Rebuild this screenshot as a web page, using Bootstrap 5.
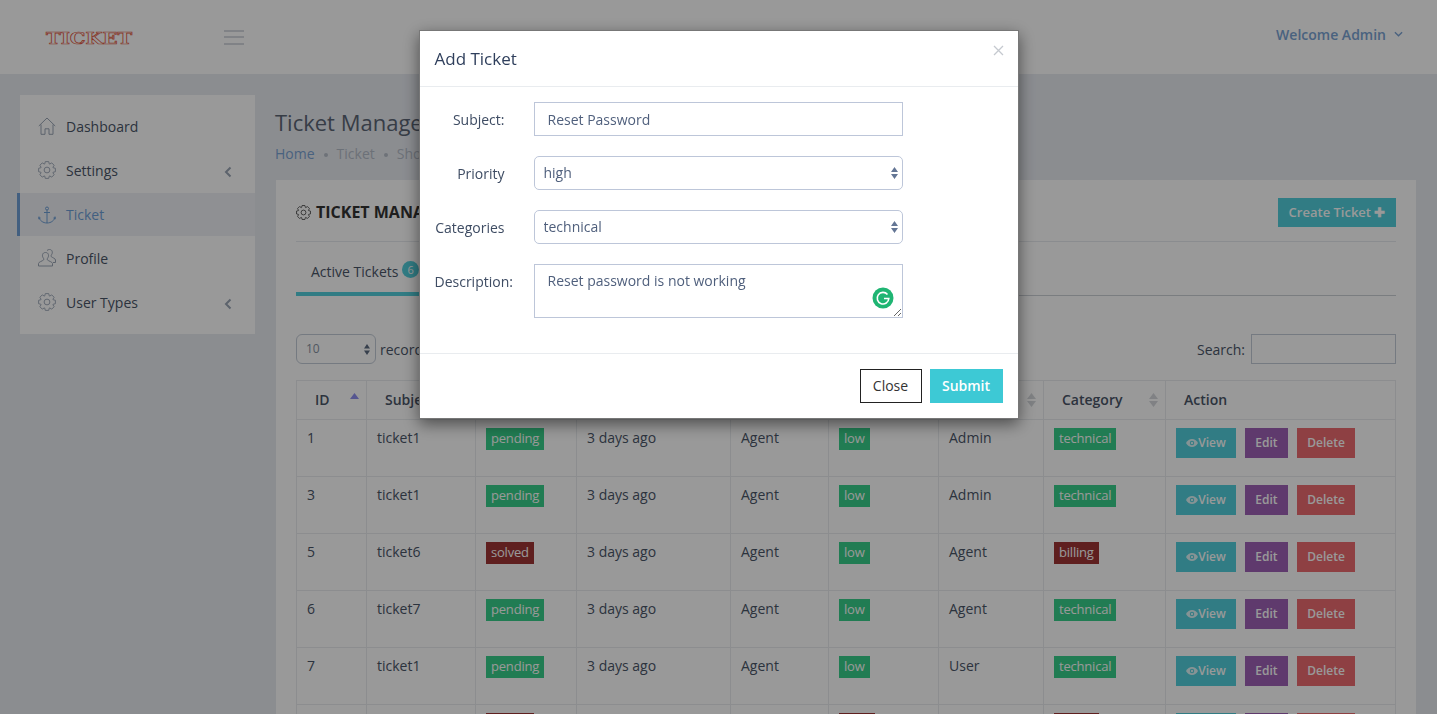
<!DOCTYPE html>
<html lang="en">
<head>
    <meta charset="UTF-8">
    <meta name="viewport" content="width=device-width, initial-scale=1.0">
    <title>Ticket Management</title>
    <link href="https://cdn.jsdelivr.net/npm/bootstrap@5.3.2/dist/css/bootstrap.min.css" rel="stylesheet">
    <style>
        html, body { height: 100%; overflow: hidden; }
        body { font-family: "Open Sans", "Liberation Sans", sans-serif; font-size: 14px; color: #4a5568; background: #e8ebf1; }

        .top-bar { height: 74px; background: #fff; padding: 0 34px 0 46px; }
        .brand-logo { width: 178px; flex: none; font-family: "DejaVu Serif", serif; font-weight: 700; font-size: 16px; color: transparent; -webkit-text-stroke: .7px #e2593f; line-height: 1; margin-top: 3px; transform: scaleX(1.23); transform-origin: left center; }
        .menu-toggle { width: 20px; height: 15px; border-top: 2px solid #d5d9df; border-bottom: 2px solid #d5d9df; margin-top: 0; }
        .menu-toggle::after { content: ""; display: block; height: 2px; background: #d5d9df; margin-top: 4px; }
        .welcome-user { color: #7ba3d4; font-weight: 600; margin-top: -6px; }

        .page-wrap { padding: 21px 21px 0 20px; gap: 20px; }
        .side-menu { width: 235px; flex: none; height: 239px; background: #fff; padding: 10px 0; }
        .side-item { height: 44px; padding: 0 23px 2px 18px; color: #4a5568; gap: 10px; position: relative; }
        .side-item svg.ic { width: 18px; height: 18px; flex: none; color: #9aa5b5; }
        .side-item.is-active { background: #eef1f6; color: #6f9fd6; height: 43px; margin-bottom: 1px; padding-bottom: 0; }
        .side-item.is-active::before { content: ""; position: absolute; left: -3px; top: 0; bottom: 0; width: 3px; background: #6f9fd6; }
        .side-item.is-active svg.ic { color: #6f9fd6; }
        .side-chevron { margin-left: auto; width: 8px; height: 12px; color: #9aa5b5; margin-top: 3px; }

        .main-col { flex: 1; min-width: 0; }
        .page-title { font-size: 22px; font-weight: 400; color: #5c6675; margin: 10px 0 5px; line-height: 34px; }
        .crumbs { font-size: 14px; line-height: 20px; color: #b5bcc8; margin-bottom: 16px; gap: 9px; }
        .crumbs a { color: #7ba3d4; text-decoration: none; }
        .crumb-dot { width: 4px; height: 4px; border-radius: 50%; background: #b7bec9; margin-top: 2px; }

        .ticket-card { background: #fff; padding: 20px 20px 0 20px; margin-left: 1px; height: 700px; }
        .card-top { border-bottom: 1px solid #e7eaee; padding-bottom: 15px; box-sizing: content-box; height: 26px; }
        .card-heading { font-size: 16px; font-weight: 700; color: #333; margin: 3px 0 0; gap: 5px; }
        .create-btn { background: #52cfdc; color: #fff; font-weight: 600; font-size: 13px; border-radius: 0; border: 0; height: 29px; width: 118px; padding: 0; margin-top: -2px; }

        .tab-row { height: 54px; border-bottom: 1px solid #ccd0d6; margin-bottom: 38px; }
        .tab-item { width: 140px; height: 54px; padding: 20px 0 0 15px; color: #4a5568; border-bottom: 4px solid #52cfdc; margin-bottom: -1px; position: relative; line-height: 20px; }
        .tab-count { display: inline-block; width: 17px; height: 17px; line-height: 17px; border-radius: 50%; background: #52cfdc; color: #fff; font-size: 11px; text-align: center; position: relative; top: -3px; }

        .table-tools { height: 30px; margin-bottom: 16px; }
        .len-select { width: 80px; height: 30px; border: 1px solid #c4ccd8; border-radius: 6px; font-size: 12px; padding: 0 9px; line-height: 28px; color: #8792a2; margin-right: 4px; position: relative; }
        .mini-arrows { position: absolute; right: 5px; top: 9px; width: 6px; height: 11px; }
        .search-box { width: 145px; height: 30px; border: 1px solid #c4ccd8; margin-left: 6px; background: #fff; }

        .ticket-table { width: 1099px; table-layout: fixed; border-collapse: collapse; color: #4a5568; }
        .ticket-table th, .ticket-table td { border: 1px solid #e9ecef; padding: 0 10px; vertical-align: top; }
        .ticket-table th { height: 39px; font-weight: 600; padding: 0 18px 2px; vertical-align: middle; position: relative; color: #4a5568; white-space: nowrap; }
        .ticket-table td { height: 57px; padding-top: 8px; line-height: 20px; }
        .sort-mark { position: absolute; right: 7px; top: 11px; width: 9px; height: 16px; }
        .tag-chip { display: inline-block; padding: 0 5px; height: 22px; line-height: 21px; color: #fff; font-size: 13px; letter-spacing: -.2px; vertical-align: top; }
        .tag-ok { background: #38cf8a; }
        .tag-bad { background: #9e3535; }
        .act-btn { display: inline-block; height: 30px; line-height: 30px; font-size: 12px; font-weight: 600; color: #fff; text-align: center; border: 0; margin-right: 9px; padding: 0; }
        .act-view { width: 60px; background: #52cfdc; }
        .act-edit { width: 43px; background: #9e61b6; }
        .act-del { width: 58px; background: #ed6b71; margin-right: 0; }
        .act-view svg { width: 12px; height: 8px; vertical-align: 0; }

        .modal-backdrop.show { opacity: .4; }
        .ticket-dialog { width: 600px; max-width: 600px; margin: 30px auto 0; }
        .ticket-dialog .modal-content { border-radius: 0; border: 1px solid #777; box-shadow: 0 5px 15px rgba(0,0,0,.5); }
        .ticket-dialog .modal-header { height: 56px; padding: 0 15px; border-bottom: 1px solid #e9ecef; position: relative; }
        .ticket-dialog .modal-title { font-size: 17px; font-weight: 400; color: #2f3f5c; line-height: 1; }
        .x-close { position: absolute; right: 14px; top: 14px; width: 11px; height: 11px; color: #c5c9cf; padding: 0; border: 0; background: none; line-height: 0; }
        .ticket-dialog .modal-body { padding: 15px 15px 0; height: 266px; }
        .form-line { margin-bottom: 20px; }
        .form-line label { width: 70px; white-space: nowrap; text-align: right; margin-right: 29px; padding-top: 8px; line-height: 20px; color: #3e4c63; flex: none; }
        .ticket-input, .ticket-select { width: 369px; height: 34px; border: 1px solid #bdc6d9; color: #4f5f7c; font-size: 14px; line-height: 20px; background-color: #fff; outline: 0; }
        .ticket-input { padding: 6px 13px; border-radius: 0; }
        textarea.ticket-input { height: 54px; display: block; padding-top: 6px; }
        .text-wrap-box { position: relative; line-height: 0; }
        .grammar-dot { position: absolute; right: 9px; bottom: 9px; width: 22px; height: 22px; }
        .ticket-select { border-radius: 5px; padding: 0 9px; appearance: none; background-image: url("data:image/svg+xml,%3Csvg xmlns='http://www.w3.org/2000/svg' width='7' height='12'%3E%3Cpath d='M3.5 0 7 5H0zM3.5 12 0 7h7z' fill='%23647695'/%3E%3C/svg%3E"); background-repeat: no-repeat; background-position: right 4px center; }
        .ticket-dialog .modal-footer { height: 65px; padding: 15px; gap: 8px; border-top: 1px solid #e9ecef; }
        .ticket-dialog .modal-footer > * { margin: 0; }
        .btn-plain { width: 62px; height: 34px; border: 1px solid #222; background: #fff; color: #333; border-radius: 0; padding: 0 0 2px; font-size: 14px; }
        .btn-send { width: 73px; height: 34px; border: 1px solid #3dc9d5; background: #3dc9d5; color: #fff; border-radius: 0; padding: 0 0 2px; font-size: 14px; font-weight: 600; }
    </style>
</head>
<body>

<svg class="d-none">
    <symbol id="ic-gear" viewBox="0 0 20 20"><g fill="none" stroke="currentColor" stroke-width="1" stroke-linejoin="round"><path id="gearTeeth" d=""/><circle cx="10" cy="10" r="3.2"/></g></symbol>
    <symbol id="ic-down" viewBox="0 0 10 6"><path d="M1 1l4 4 4-4" fill="none" stroke="currentColor" stroke-width="1.5"/></symbol>
</svg>

<header class="top-bar d-flex align-items-center">
    <div class="brand-logo">TICKET</div>
    <div class="menu-toggle"></div>
    <div class="welcome-user ms-auto d-flex align-items-center gap-2">Welcome Admin <svg width="9" height="6"><use href="#ic-down"/></svg></div>
</header>

<div class="page-wrap d-flex">
    <nav class="side-menu">
        <div class="side-item d-flex align-items-center">
            <svg class="ic" viewBox="0 0 18 18" fill="none" stroke="currentColor"><path d="M.8 9 9 1l8.2 8M3 7.500v9.800h4v-5.500h4v5.500h4V7.500"/></svg>Dashboard
        </div>
        <div class="side-item d-flex align-items-center">
            <svg class="ic"><use href="#ic-gear"/></svg>Settings
            <svg class="side-chevron" viewBox="0 0 8 12"><path d="M6.500 1.500 2 6l4.500 4.500" fill="none" stroke="currentColor" stroke-width="2"/></svg>
        </div>
        <div class="side-item is-active d-flex align-items-center">
            <svg class="ic" viewBox="0 0 18 18" fill="none" stroke="currentColor"><circle cx="9" cy="2.500" r="1.500"/><path d="M9 4v13M6 6.500h6M1 10.500 .8 13l1.800-1M1 11c.5 3.500 4 6 8 6s7.500-2.500 8-6M17 10.500l.2 2.500-1.800-1"/></svg>Ticket
        </div>
        <div class="side-item d-flex align-items-center">
            <svg class="ic" viewBox="0 0 18 18" fill="none" stroke="currentColor"><path d="M.5 17v-2.500c0-1.500 4-2.500 5-3.500.5-.8.2-1.500-.5-2.500C4 7 4.200 3.500 7.500 3.500s3.500 3.500 2.500 5c-.7 1-1 1.700-.5 2.500 1 1 5 2 5 3.500V17zM9 1.500c.8-.7 1.500-1 2.500-1 3 0 3.300 3.300 2.300 4.800-.7 1-.9 1.700-.5 2.400.8.800 4.200 1.800 4.200 3.300v2.500h-2.500"/></svg>Profile
        </div>
        <div class="side-item d-flex align-items-center">
            <svg class="ic"><use href="#ic-gear"/></svg>User Types
            <svg class="side-chevron" viewBox="0 0 8 12"><path d="M6.500 1.500 2 6l4.500 4.500" fill="none" stroke="currentColor" stroke-width="2"/></svg>
        </div>
    </nav>

    <main class="main-col">
        <h1 class="page-title">Ticket Management</h1>
        <div class="crumbs d-flex align-items-center">
            <a href="#">Home</a><span class="crumb-dot"></span><span>Ticket</span><span class="crumb-dot"></span><span>Show</span>
        </div>

        <section class="ticket-card">
            <div class="card-top d-flex justify-content-between align-items-start">
                <h2 class="card-heading d-flex align-items-center">
                    <svg width="15" height="15"><use href="#ic-gear"/></svg>TICKET MANAGEMENT
                </h2>
                <button class="create-btn">Create Ticket <b>✚</b></button>
            </div>

            <div class="tab-row">
                <div class="tab-item">Active Tickets <span class="tab-count">6</span></div>
            </div>

            <div class="table-tools d-flex align-items-center">
                <div class="len-select">10
                    <svg class="mini-arrows" viewBox="0 0 6 11"><path d="M3 0l3 4.500H0zM3 11 0 6.500h6z" fill="#5d6b80"/></svg>
                </div>
                <span>records</span>
                <span class="ms-auto">Search:</span>
                <div class="search-box"></div>
            </div>

            <table class="ticket-table" id="ticketTable">
                <colgroup>
                    <col style="width:70px"><col style="width:109px"><col style="width:101px"><col style="width:154px"><col style="width:98px"><col style="width:110px"><col style="width:105px"><col style="width:122px"><col style="width:230px">
                </colgroup>
                <thead>
                    <tr>
                        <th>ID<svg class="sort-mark" viewBox="0 0 9 16"><path d="M4.500 1 9 7H0z" fill="#8f8ff0"/></svg></th>
                        <th>Subject</th><th>Status</th><th>Created</th><th>Assigned</th><th>Priority</th>
                        <th>Creator<svg class="sort-mark" viewBox="0 0 9 16"><path d="M4.500 1 9 7H0zM4.500 15 0 9h9z" fill="#d5d8dc"/></svg></th>
                        <th>Category<svg class="sort-mark" viewBox="0 0 9 16"><path d="M4.500 1 9 7H0zM4.500 15 0 9h9z" fill="#d5d8dc"/></svg></th>
                        <th>Action</th>
                    </tr>
                </thead>
                <tbody></tbody>
            </table>
        </section>
    </main>
</div>

<div class="modal-backdrop show"></div>
<div class="modal show d-block" tabindex="-1">
    <div class="modal-dialog ticket-dialog">
        <div class="modal-content">
            <div class="modal-header">
                <h5 class="modal-title">Add Ticket</h5>
                <button class="x-close" aria-label="Close"><svg width="11" height="11" viewBox="0 0 11 11"><path d="M1 1l9 9M10 1l-9 9" stroke="currentColor" stroke-width="1.300"/></svg></button>
            </div>
            <div class="modal-body">
                <div class="form-line d-flex">
                    <label>Subject:</label>
                    <input class="ticket-input" type="text" value="Reset Password">
                </div>
                <div class="form-line d-flex">
                    <label>Priority</label>
                    <select class="ticket-select"><option>high</option><option>medium</option><option>low</option></select>
                </div>
                <div class="form-line d-flex">
                    <label>Categories</label>
                    <select class="ticket-select"><option>technical</option><option>billing</option></select>
                </div>
                <div class="form-line d-flex">
                    <label>Description:</label>
                    <div class="text-wrap-box">
                        <textarea class="ticket-input">Reset password is not working</textarea>
                        <svg class="grammar-dot" viewBox="0 0 22 22"><circle cx="11" cy="11" r="10.500" fill="#1fb573"/><path d="M15.500 7.500A5.800 5.800 0 1 0 16.800 11.500H12" fill="none" stroke="#fff" stroke-width="1.600"/></svg>
                    </div>
                </div>
            </div>
            <div class="modal-footer">
                <button class="btn-plain">Close</button>
                <button class="btn-send">Submit</button>
            </div>
        </div>
    </div>
</div>

<script src="https://cdn.jsdelivr.net/npm/bootstrap@5.3.2/dist/js/bootstrap.bundle.min.js"></script>
<script>
// contorno del engranaje: 8 dientes
let gear = '';
for (let i = 0; i < 8; i++) {
    const a = i * Math.PI / 4;
    [[7.2, -.36], [9.5, -.2], [9.5, .2], [7.2, .36]].forEach(([r, d], j) => {
        const x = (10 + r * Math.cos(a + d)).toFixed(2), y = (10 + r * Math.sin(a + d)).toFixed(2);
        gear += (i === 0 && j === 0 ? 'M' : 'L') + x + ' ' + y;
    });
}
document.getElementById('gearTeeth').setAttribute('d', gear + 'Z');

// filas de la tabla
const rows = [
    [1, 'ticket1', 'pending', 'low', 'Admin', 'technical'],
    [3, 'ticket1', 'pending', 'low', 'Admin', 'technical'],
    [5, 'ticket6', 'solved', 'low', 'Agent', 'billing'],
    [6, 'ticket7', 'pending', 'low', 'Agent', 'technical'],
    [7, 'ticket1', 'pending', 'low', 'User', 'technical'],
    [8, 'ticket6', 'solved', 'high', 'Agent', 'billing']
];
const eye = '<svg viewBox="0 0 12 8"><path d="M0 4c1.500-2.500 3.500-4 6-4s4.500 1.500 6 4c-1.500 2.500-3.500 4-6 4S1.500 6.500 0 4z" fill="#dff6f8"/><circle cx="6" cy="4" r="2.200" fill="#52cfdc"/><circle cx="6" cy="4" r="1.200" fill="#dff6f8"/></svg>';
document.querySelector('#ticketTable tbody').innerHTML = rows.map(r => `
    <tr>
        <td>${r[0]}</td><td>${r[1]}</td>
        <td><span class="tag-chip ${r[2] === 'pending' ? 'tag-ok' : 'tag-bad'}">${r[2]}</span></td>
        <td>3 days ago</td><td>Agent</td>
        <td><span class="tag-chip ${r[3] === 'low' ? 'tag-ok' : 'tag-bad'}">${r[3]}</span></td>
        <td>${r[4]}</td>
        <td><span class="tag-chip ${r[5] === 'technical' ? 'tag-ok' : 'tag-bad'}">${r[5]}</span></td>
        <td><button class="act-btn act-view">${eye}View</button><button class="act-btn act-edit">Edit</button><button class="act-btn act-del">Delete</button></td>
    </tr>`).join('');
</script>
</body>
</html>
